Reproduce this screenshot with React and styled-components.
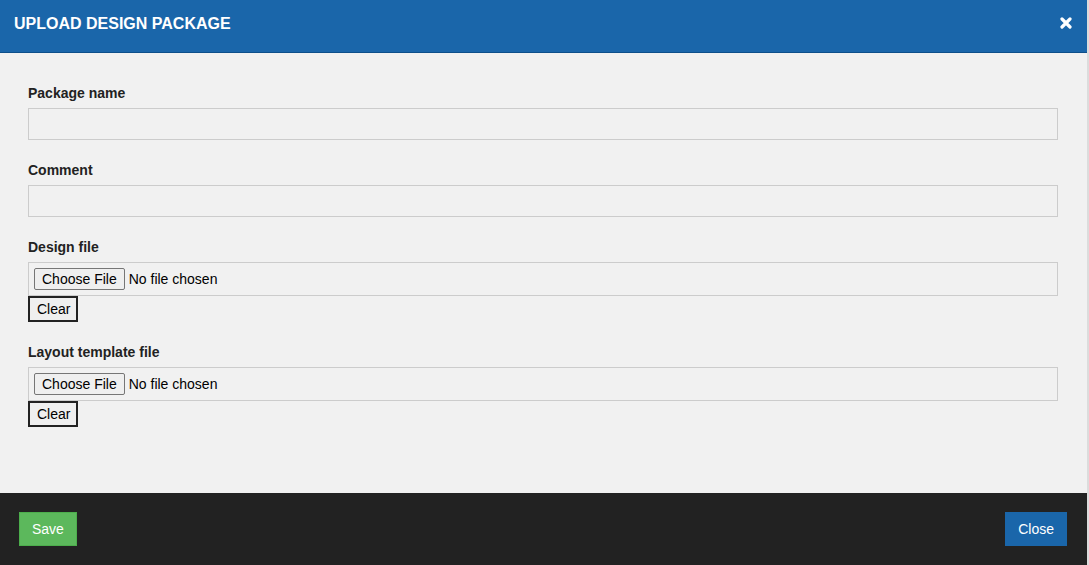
import React from "react";
import styled, { createGlobalStyle } from "styled-components";

const Global = createGlobalStyle`
  html, body { margin: 0; padding: 0; background: #dcdcdc; }
  body { font-family: "Liberation Sans", Arial, sans-serif; }
  * { box-sizing: border-box; }
`;

const Modal = styled.div`
  width: 1087px;
  height: 565px;
  display: flex;
  flex-direction: column;
  background: #f1f1f1;
`;

const Header = styled.div`
  height: 53px;
  flex: none;
  background: #1a66aa;
  border-bottom: 1px solid #0e4f8a;
  display: flex;
  align-items: flex-start;
  justify-content: space-between;
  padding: 15px 15px 0 14px;
`;

const Title = styled.h4`
  margin: 0;
  font-size: 16px;
  line-height: 18px;
  font-weight: bold;
  color: #fff;
  letter-spacing: 0;
`;

const CloseX = styled.button`
  border: 0;
  background: transparent;
  padding: 0;
  margin-top: 2px;
  width: 12px;
  height: 12px;
  display: flex;
  cursor: pointer;
`;

const Body = styled.div`
  flex: 1;
  padding: 30px 29px 0 28px;
`;

const Group = styled.div`
  margin-bottom: 20px;
`;

const Label = styled.label`
  display: block;
  font-size: 14px;
  line-height: 20px;
  font-weight: bold;
  color: #222;
  margin-bottom: 5px;
`;

const TextInput = styled.input`
  display: block;
  width: 100%;
  height: 32px;
  border: 1px solid #cccccc;
  background: #f1f1f1;
  padding: 6px 12px;
  font: 14px "Liberation Sans", Arial, sans-serif;
  outline: none;
`;

const FileInput = styled.input`
  display: block;
  width: 100%;
  height: 34px;
  border: 1px solid #cccccc;
  background: #f1f1f1;
  padding: 5px;
  font: 14px "Liberation Sans", Arial, sans-serif;
  color: #000;
  line-height: 22px;

  &::file-selector-button {
    height: 22px;
    padding: 0 7px;
    margin: 0 4px 0 0;
    border: 1px solid #767676;
    border-radius: 2px;
    background: #efefef;
    color: #000;
    font: 14px "Liberation Sans", Arial, sans-serif;
  }
`;

const ClearButton = styled.button`
  display: block;
  height: 26px;
  padding: 0 6px 0 7px;
  border: 2px solid #222;
  border-radius: 0;
  background: #efefef;
  color: #000;
  font: 14px "Liberation Sans", Arial, sans-serif;
`;

const Footer = styled.div`
  height: 72px;
  flex: none;
  background: #222;
  display: flex;
  align-items: center;
  justify-content: space-between;
  padding: 0 20px 0 19px;
`;

const ActionButton = styled.button`
  height: 34px;
  padding: 0 12px;
  border: 1px solid ${(p) => (p.$variant === "success" ? "#4cae4c" : "#1a66aa")};
  background: ${(p) => (p.$variant === "success" ? "#5cb85c" : "#1a66aa")};
  color: #fff;
  font: 14px "Liberation Sans", Arial, sans-serif;
  border-radius: 0;
`;

function Field({ label }) {
  return (
    <Group>
      <Label>{label}</Label>
      <TextInput type="text" />
    </Group>
  );
}

function FileField({ label }) {
  return (
    <Group>
      <Label>{label}</Label>
      <FileInput type="file" />
      <ClearButton type="button">Clear</ClearButton>
    </Group>
  );
}

export default function App() {
  return (
    <>
      <Global />
      <Modal>
        <Header>
          <Title>UPLOAD DESIGN PACKAGE</Title>
          <CloseX aria-label="close">
            <svg width="12" height="12" viewBox="0 0 12 12">
              <path d="M2 2 L10 10 M10 2 L2 10" stroke="#fff" strokeWidth="3.2" strokeLinecap="round" />
            </svg>
          </CloseX>
        </Header>
        <Body>
          <Field label="Package name" />
          <Field label="Comment" />
          <FileField label="Design file" />
          <FileField label="Layout template file" />
        </Body>
        <Footer>
          <ActionButton $variant="success">Save</ActionButton>
          <ActionButton $variant="primary">Close</ActionButton>
        </Footer>
      </Modal>
    </>
  );
}
